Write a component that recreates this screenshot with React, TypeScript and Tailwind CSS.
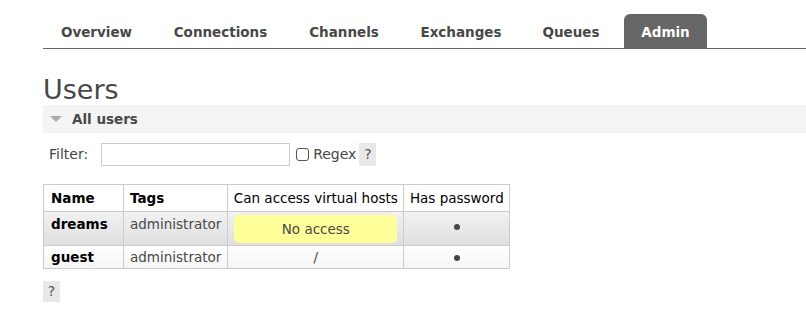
import React from "react";

const tabs: [string, string][] = [
  ["Overview", "w-[105px]"],
  ["Connections", "w-[127px]"],
  ["Channels", "w-[104px]"],
  ["Exchanges", "w-[114px]"],
  ["Queues", "w-[90px]"],
  ["Admin", "w-[83px]"],
];

function Dot() {
  return <span className="inline-block w-[6px] h-[6px] rounded-full bg-[#444]" />;
}

export default function App() {
  return (
    <div className="w-[806px] h-[329px] bg-white text-[#484848] overflow-hidden" style={{ fontFamily: '"DejaVu Sans", Verdana, sans-serif' }}>
      <div className="pl-[43px] pt-[14px]">
        <div className="flex gap-[8px] pl-[1px] border-b border-[#666] h-[35px] items-end">
          {tabs.map(([t, w]) => (
            <div
              key={t}
              className={
                w +
                " h-[34px] flex items-center justify-center pt-[2px] text-[13.5px] font-bold rounded-t-[6px] whitespace-nowrap " +
                (t === "Admin" ? "bg-[#666] text-white" : "text-[#484848]")
              }
            >
              {t}
            </div>
          ))}
        </div>
      </div>
      <div className="pl-[43px]">
        <h1 className="text-[27px] leading-[32px] mt-[25px] text-[#484848] font-normal">Users</h1>
        <div className="bg-[#f4f4f4] h-[28px] flex items-center pl-[7px] mt-[-1px]">
          <svg width="12" height="8" viewBox="0 0 12 8" className="mr-[10px]">
            <polygon points="0,1 12,1 6,7" fill="#aaa" />
          </svg>
          <span className="text-[13.5px] font-bold text-[#484848]">All users</span>
        </div>
        <div className="flex items-center mt-[10px] ml-[6px] h-[23px] text-[14px]">
          <span className="text-[#444]">Filter:</span>
          <input className="ml-[13px] w-[189px] h-[23px] border border-[#ccc] bg-white" />
          <span className="ml-[6px] w-[13px] h-[13px] border border-[#555] rounded-[3px] bg-white" />
          <span className="ml-[4px] text-[#484848]">Regex</span>
          <span className="ml-[3px] w-[17px] h-[23px] bg-[#e8e8e8] flex items-center justify-center text-[#555]">?</span>
        </div>
        <table className="mt-[18px] border-collapse text-[13.5px] whitespace-nowrap">
          <thead>
            <tr className="h-[27px]">
              <th className="w-[80px] border border-[#ccc] text-left font-bold text-black px-[7px]">Name</th>
              <th className="w-[102px] border border-[#ccc] text-left font-bold text-black px-[6px]">Tags</th>
              <th className="w-[176px] border border-[#ccc] font-normal text-black px-[4px]">Can access virtual hosts</th>
              <th className="w-[106px] border border-[#ccc] font-normal text-black px-[4px]">Has password</th>
            </tr>
          </thead>
          <tbody>
            <tr className="bg-[linear-gradient(#f2f2f2,#dedede)]">
              <td className="border border-[#ccc] px-[7px] align-top pt-[2px] font-bold text-black h-[34px]">dreams</td>
              <td className="border border-[#ccc] px-[6px] align-top pt-[2px] text-[#484848]">administrator</td>
              <td className="border border-[#ccc] px-[6px] py-[2px]">
                <div className="bg-[#ffff99] rounded-[5px] h-[28px] flex items-center justify-center pt-[2px] text-[#484848]">No access</div>
              </td>
              <td className="border border-[#ccc] align-top pt-[7px] text-center leading-none"><Dot /></td>
            </tr>
            <tr className="bg-[linear-gradient(#ffffff,#f4f4f4)] h-[23px]">
              <td className="border border-[#ccc] px-[7px] font-bold text-black">guest</td>
              <td className="border border-[#ccc] px-[6px] text-[#484848]">administrator</td>
              <td className="border border-[#ccc] px-[6px] text-center text-[#484848]">/</td>
              <td className="border border-[#ccc] text-center leading-none"><Dot /></td>
            </tr>
          </tbody>
        </table>
        <div className="mt-[12px] w-[17px] h-[21px] bg-[#e8e8e8] flex items-center justify-center text-[14px] text-[#555]">?</div>
      </div>
    </div>
  );
}
